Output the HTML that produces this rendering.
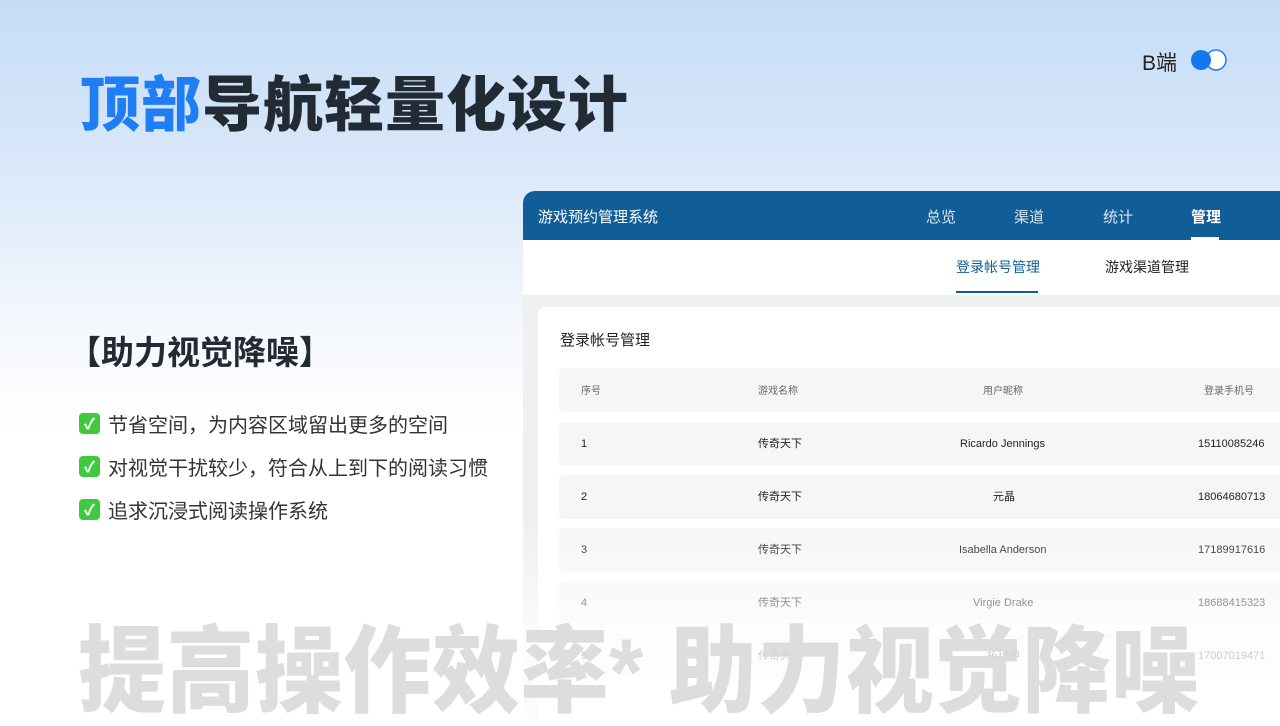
<!DOCTYPE html>
<html style="background:#fff"><head><meta charset="utf-8"><style>
*{margin:0;padding:0;box-sizing:border-box}
body{width:1280px;height:720px;overflow:hidden;position:relative;font-family:"Liberation Sans","Noto Sans CJK SC",sans-serif;background:linear-gradient(180deg,#c5dcf7 0%,#dbe9f9 25%,#f4f8fd 45%,#ffffff 60%,#ffffff 100%)}
.title{position:absolute;left:80px;top:66px;font-size:60px;font-weight:900;color:#222a33;letter-spacing:1px;line-height:80px}
.title span{color:#1f7ef5}
.b{position:absolute;left:1142px;top:47px;font-size:21px;color:#222}
.tg{position:absolute;left:1190px;top:49px;width:38px;height:22px}
.h2{position:absolute;left:68px;top:326px;font-size:33px;font-weight:700;color:#222a33}
.li{position:absolute;left:79px;font-size:20px;color:#333;display:flex;align-items:center}
.ck{width:21px;height:21px;background:#3ec93e;border-radius:4px;color:#fff;font-size:15px;font-weight:900;display:inline-flex;align-items:center;justify-content:center;margin-right:8px}
.panel{position:absolute;left:523px;top:191px;width:757px;height:529px;background:#eff0f2;border-radius:12px 0 0 0;overflow:hidden}
.hd{height:49px;background:#115d97;color:#fff;font-size:15px;position:relative}
.hd div{position:absolute;top:15px}
.sub{height:55px;background:#fff;position:relative;font-size:14px;color:#222}
.card{position:absolute;left:15px;top:116px;width:760px;height:420px;background:#fff;border-radius:6px}
.row{position:absolute;left:21px;width:740px;height:44px;background:#f6f6f7;border-radius:5px;font-size:11px;color:#222}
.row span{position:absolute;top:0;height:44px;line-height:44px}
.fade{position:absolute;left:0;top:330px;width:757px;height:200px;background:linear-gradient(180deg,rgba(255,255,255,0) 0%,rgba(255,255,255,.75) 60%,rgba(255,255,255,.85) 100%)}
.big{position:absolute;left:78px;top:618px;font-size:88px;font-weight:900;color:rgba(215,215,215,.85);letter-spacing:0.5px;white-space:nowrap;line-height:100px;transform:scaleY(1.08);transform-origin:left top}
</style></head><body>
<div class="title"><span>顶部</span>导航轻量化设计</div>
<div class="b">B端</div>
<svg class="tg" viewBox="0 0 38 22"><circle cx="26" cy="11" r="10" fill="#fff" stroke="#1f7ef5" stroke-width="1.5"/><circle cx="11" cy="11" r="10" fill="#1577f0"/></svg>
<div class="h2">【助力视觉降噪】</div>
<div class="li" style="top:409px"><span class="ck">✓</span>节省空间，为内容区域留出更多的空间</div>
<div class="li" style="top:452px"><span class="ck">✓</span>对视觉干扰较少，符合从上到下的阅读习惯</div>
<div class="li" style="top:495px"><span class="ck">✓</span>追求沉浸式阅读操作系统</div>
<div class="panel">
<div class="hd"><div style="left:15px">游戏预约管理系统</div><div style="left:403px;opacity:.85">总览</div><div style="left:491px;opacity:.85">渠道</div><div style="left:580px;opacity:.85">统计</div><div style="left:668px;font-weight:700">管理</div><div style="left:668px;top:46px;width:28px;height:3px;background:#fff"></div></div>
<div class="sub"><div style="position:absolute;left:433px;top:17px;color:#115d97">登录帐号管理</div><div style="position:absolute;left:433px;top:51px;width:82px;height:2px;background:#115d97"></div><div style="position:absolute;left:582px;top:17px">游戏渠道管理</div></div>
<div class="card">
<div style="position:absolute;left:22px;top:22px;font-size:15px;color:#222">登录帐号管理</div>
<div class="row" style="top:61px;color:#666;font-size:10px"><span style="left:22px;top:2px">序号</span><span style="left:199px;top:2px">游戏名称</span><span style="left:424px;top:2px">用户昵称</span><span style="left:645px;top:2px">登录手机号</span></div>
<div class="row" style="top:115px"><span style="left:22px">1</span><span style="left:199px">传奇天下</span><span style="left:401px">Ricardo Jennings</span><span style="left:639px">15110085246</span></div>
<div class="row" style="top:168px"><span style="left:22px">2</span><span style="left:199px">传奇天下</span><span style="left:434px">元晶</span><span style="left:639px">18064680713</span></div>
<div class="row" style="top:221px"><span style="left:22px">3</span><span style="left:199px">传奇天下</span><span style="left:400px">Isabella Anderson</span><span style="left:639px">17189917616</span></div>
<div class="row" style="top:274px"><span style="left:22px">4</span><span style="left:199px">传奇天下</span><span style="left:414px">Virgie Drake</span><span style="left:639px">18688415323</span></div>
<div class="row" style="top:327px"><span style="left:22px">5</span><span style="left:199px">传奇天下</span><span style="left:428px">拓玛伊</span><span style="left:639px">17007019471</span></div>
</div>
<div class="fade"></div>
</div>
<div class="big">提高操作效率* 助力视觉降噪</div>
</body></html>
